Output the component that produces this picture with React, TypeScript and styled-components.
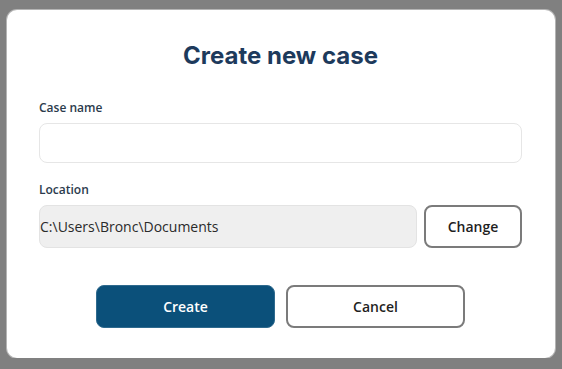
import { useState } from "react";
import styled, { createGlobalStyle } from "styled-components";

const GlobalStyle = createGlobalStyle`
    html, body {
        margin: 0;
        padding: 0;
        background: #808080;
    }
    body {
        font-family: "Open Sans", "Liberation Sans", sans-serif;
    }
    * {
        box-sizing: border-box;
    }
`;

const Dialog = styled.div`
    width: 548px;
    height: 348px;
    margin: 10px auto 0;
    padding: 30px 33px 0 32px;
    background: #ffffff;
    border-radius: 10px;
    box-shadow: 0 0 0 1px #b4b4b4;
    display: flex;
    flex-direction: column;
`;

const Title = styled.h1`
    margin: 0 0 28px;
    font-family: Inter, "Liberation Sans", sans-serif;
    font-size: 24px;
    line-height: 32px;
    font-weight: 700;
    color: #1d3a5c;
    text-align: center;
`;

const Field = styled.div<{ $top?: number }>`
    display: flex;
    flex-direction: column;
    margin-top: ${(p) => p.$top ?? 0}px;
`;

const Label = styled.label`
    font-size: 12px;
    line-height: 16px;
    font-weight: 600;
    color: #2b3b4c;
    margin-bottom: 7px;
`;

const TextInput = styled.input`
    height: 40px;
    width: 100%;
    border: 1.5px solid #e6e6e6;
    border-radius: 8px;
    padding: 0 12px;
    font-family: inherit;
    font-size: 14px;
    outline: none;
`;

const Row = styled.div`
    display: flex;
    gap: 7px;
`;

const PathBox = styled.div`
    flex: 1;
    height: 43px;
    display: flex;
    align-items: center;
    padding-left: 0;
    background: #efefef;
    border: 1px solid #e3e3e3;
    border-radius: 8px;
    font-size: 14px;
    color: #2a2a2a;
    white-space: nowrap;
    overflow: hidden;
`;

const Button = styled.button<{ $primary?: boolean; $width: number }>`
    width: ${(p) => p.$width}px;
    height: 43px;
    border-radius: 8px;
    font-family: inherit;
    font-size: 14px;
    font-weight: 600;
    cursor: pointer;
    background: ${(p) => (p.$primary ? "#0b507a" : "#ffffff")};
    color: ${(p) => (p.$primary ? "#ffffff" : "#1f1f1f")};
    border: ${(p) => (p.$primary ? "1px solid #2f6a8e" : "2px solid #7b7b7b")};
`;

const Actions = styled.div`
    display: flex;
    justify-content: center;
    gap: 11px;
    margin-top: 37px;
`;

export default function App() {
    const [name, setName] = useState("");
    const location = "C:\\Users\\Bronc\\Documents";

    return (
        <>
            <GlobalStyle />
            <Dialog>
                <Title>Create new case</Title>
                <Field>
                    <Label>Case name</Label>
                    <TextInput value={name} onChange={(e) => setName(e.target.value)} />
                </Field>
                <Field $top={19}>
                    <Label>Location</Label>
                    <Row>
                        <PathBox>{location}</PathBox>
                        <Button $width={98}>Change</Button>
                    </Row>
                </Field>
                <Actions>
                    <Button $primary $width={179}>Create</Button>
                    <Button $width={179}>Cancel</Button>
                </Actions>
            </Dialog>
        </>
    );
}
